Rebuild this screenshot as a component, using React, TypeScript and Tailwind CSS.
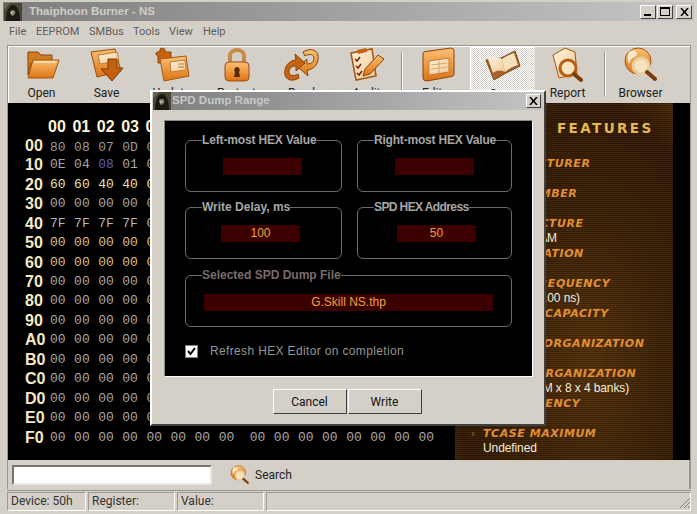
import React from 'react';

const sans = "font-['Liberation_Sans',Arial,sans-serif]";
const narrow = "font-['Roboto',Arial,sans-serif]";

const Org = 'url(#org)';
const Cream = 'url(#cream)';

const AppIcon = () => (
  <svg width="18" height="18" viewBox="0 0 18 18" className="shrink-0">
    <rect width="18" height="18" fill="#4a4636" />
    <path d="M2 18 C2 8 5 2 9 2 C13 2 16 8 16 18Z" fill="#1c1a14" />
    <path d="M6 10 C6 7 9 6 11 8 C12 10 10 13 8 13Z" fill="#8a8770" />
    <path d="M7 9l2 1-2 1z" fill="#e4e2cc" />
    <path d="M0 0h6L0 7z" fill="#6b664e" />
  </svg>
);

const FolderOpen = () => (
  <svg width="36" height="36" viewBox="0 0 36 36">
    <path d="M4 5h10l3 3h11v8H7L4 28z" fill="#d07a24" stroke="#8a4408" />
    <path d="M9 13h26l-6 18H4z" fill={Org} stroke="#a65510" />
    <path d="M10 15h22" stroke="#ffe6c0" strokeWidth="1.5" />
  </svg>
);

const FolderSave = () => (
  <svg width="36" height="36" viewBox="0 0 36 36">
    <path d="M2 5l24-3 6 22-24 6z" fill={Org} stroke="#9a4c0c" />
    <path d="M9 8l19-3 2 9-19 3z" fill={Cream} stroke="#c47a30" />
    <path d="M19 12h9v9h6L23 34 12 22h7z" fill="#c2600f" stroke="#7c3b06" />
  </svg>
);

const FolderPuzzle = () => (
  <svg width="36" height="36" viewBox="0 0 36 36">
    <path d="M6 2c3-2 6 0 5 3h6v7c-3 0-5 2-5 4H4V9C1 8 1 4 6 5z" fill="#c8640f" stroke="#8a4408" />
    <path d="M6 12l26-3 3 20-25 5z" fill={Org} stroke="#a65510" />
    <path d="M16 15l15-2 1 10-15 2z" fill={Cream} stroke="#c47a30" />
    <path d="M24 17h6M24 20h6" stroke="#b87a3a" />
  </svg>
);

const Lock = () => (
  <svg width="36" height="36" viewBox="0 0 36 36">
    <path d="M11 17V9c0-8 14-8 14 0v8" fill="none" stroke="#c98a4a" strokeWidth="4" />
    <rect x="6" y="15" width="24" height="19" rx="4" fill={Org} stroke="#9a4c0c" />
    <path d="M18 20a3 3 0 0 1 2 5l1 5h-6l1-5a3 3 0 0 1 2-5z" fill="#5a2a06" />
  </svg>
);

const Arrows = () => (
  <svg width="36" height="36" viewBox="0 0 36 36">
    <path d="M19 5c8-5 17-2 15 8-1 6-6 10-11 10l1 6-10-9 9-8v5c5 0 7-3 7-6 0-3-4-5-9-2z" fill={Org} stroke="#8a4408" />
    <path d="M15 31C7 36-1 32 1 23c1-6 6-10 11-10l-1-6 10 9-9 8v-5c-5 0-7 3-7 6 0 3 4 5 9 2z" fill="#c8640f" stroke="#8a4408" />
  </svg>
);

const Checklist = () => (
  <svg width="36" height="36" viewBox="0 0 36 36">
    <path d="M2 6l21-4 4 27-20 4z" fill={Cream} stroke="#a65510" strokeWidth="1.5" />
    <path d="M8 3l9-2 1 4-9 2z" fill="#c8640f" />
    <path d="M6 12l2 2 3-4M7 19l2 2 3-4M8 26l2 2 3-4" fill="none" stroke="#7a2a06" strokeWidth="1.6" />
    <path d="M16 22l13-14 6 4-14 15-7 2z" fill={Org} stroke="#8a4408" />
  </svg>
);

const Editor = () => (
  <svg width="36" height="36" viewBox="0 0 36 36">
    <path d="M3 7q0-2 2-2.400L31 1q3 0 3 3v23q0 2-2 2.400L7 34q-4 0-4-3z" fill={Org} stroke="#8a4408" />
    <path d="M9 14l20-3v14L9 28z" fill={Cream} stroke="#c47a30" />
    <path d="M11 18l16-2M11 22l16-2M19 14v12" stroke="#d9a873" strokeWidth="1.2" />
  </svg>
);

const Book = () => (
  <svg width="36" height="36" viewBox="0 0 36 36">
    <path d="M1 12l15-2 14-7 5 15-16 8-10 6z" fill="#a8622c" stroke="#7a4216" />
    <path d="M3 11c5-1 10-2 14 0l3 13c-4-2-8-2-12 1z" fill={Cream} />
    <path d="M17 11c4-3 9-5 12-6l4 12c-4 1-9 3-13 7z" fill="#f5e2bc" />
  </svg>
);

const Report = () => (
  <svg width="36" height="36" viewBox="0 0 36 36">
    <path d="M3 8l12-7 10 4 2 22-18 4z" fill={Cream} stroke="#a65510" />
    <circle cx="18" cy="21" r="8" fill="#f6e3c0" stroke="#b65f14" strokeWidth="3" />
    <path d="M24 27l7 6" stroke="#7c3b06" strokeWidth="4" strokeLinecap="round" />
  </svg>
);

const Globe = ({ size = 36 }: { size?: number }) => (
  <svg width={size} height={size} viewBox="0 0 36 36">
    <circle cx="15" cy="14" r="13" fill={Org} stroke="#a65510" />
    <path d="M6 5c4-3 8-1 8 2s-6 3-7 8-4-6-1-10z" fill="#fde8c8" />
    <circle cx="18" cy="19" r="8" fill="#f6e3c0" stroke="#e7cda0" strokeWidth="3" />
    <path d="M24 25l8 7" stroke="#7c3b06" strokeWidth="4" strokeLinecap="round" />
  </svg>
);

const ToolBtn = ({ label, icon, active }: { label: string; icon: React.ReactNode; active?: boolean }) => (
  <div
    className={`w-[65px] h-[55px] flex flex-col items-center shrink-0 ${
      active
        ? 'bg-[repeating-conic-gradient(#d4d0c8_0_25%,#ffffff_0_50%)] bg-[length:2px_2px] border-t border-l border-white'
        : ''
    }`}
  >
    {icon}
    <span className={`text-[12px] leading-[14px] mt-[3px] text-[#222] ${narrow}`}>{label}</span>
  </div>
);

const Sep = () => <div className="w-[2px] h-[44px] mx-[2px] my-[5px] border-l border-[#9a968e] border-r-white shrink-0 border-r" />;

const rows: { label: string; cells: string[]; color: string }[] = [
  { label: '00', cells: '80 08 07 0D 0A 01 40 00 04 50 50 00 82 10 00 00'.split(' '), color: 'text-[#9a9a9a]' },
  { label: '10', cells: '0E 04 08 01 01 00 0E 00 00 00 00 00 00 00 00 00'.split(' '), color: 'text-[#a8a8a8]' },
  { label: '20', cells: '60 60 40 40 00 00 00 00 00 00 00 00 00 00 00 00'.split(' '), color: 'text-[#e6e2a8]' },
  { label: '30', cells: '00 00 00 00 00 00 00 00 00 00 00 00 00 00 00 00'.split(' '), color: 'text-[#a8a8a8]' },
  { label: '40', cells: '7F 7F 7F 7F 00 00 00 00 00 00 00 00 00 00 00 00'.split(' '), color: 'text-[#b4b4b4]' },
  { label: '50', cells: Array(16).fill('00'), color: 'text-[#d8c088]' },
  { label: '60', cells: Array(16).fill('00'), color: 'text-[#d8c088]' },
  ...['70', '80', '90', 'A0', 'B0', 'C0', 'D0', 'E0', 'F0'].map((label) => ({
    label,
    cells: Array(16).fill('00') as string[],
    color: 'text-[#a8a8a8]',
  })),
];

const header = ['00', '01', '02', '03', '04', '05', '06', '07'];

const HexTable = () => (
  <div className="w-[447px] shrink-0 pt-[14px] bg-black">
    <div className="flex h-[19px] pl-[40px] items-center">
      {header.map((h) => (
        <span key={h} className={`w-[24.4px] text-[16px] font-bold text-[#fff4d8] ${sans}`}>{h}</span>
      ))}
    </div>
    {rows.map((r) => (
      <div key={r.label} className="flex h-[19.47px] items-center">
        <span className={`w-[42px] pl-[17px] text-[16px] font-bold text-[#f5e8c4] ${sans}`}>{r.label}</span>
        {r.cells.map((c, i) => (
          <span
            key={i}
            className={`w-[24.1px] text-[13px] leading-[14px] font-['Liberation_Mono',monospace] ${
              i === 8 ? 'ml-[7px]' : ''
            } ${r.label === '10' && i === 2 ? 'text-[#5c5cb4]' : r.color} ${
              r.label === '00' ? 'h-[10px] overflow-hidden' : ''
            }`}
          >
            {c}
          </span>
        ))}
      </div>
    ))}
  </div>
);

const features: { title: string; value?: string; valueClass?: string }[] = [
  { title: 'MANUFACTURER' },
  { title: 'PART NUMBER' },
  { title: 'ARCHITECTURE', value: 'DDR2 SDRAM', valueClass: 'tracking-[-0.6px]' },
  { title: 'ORGANIZATION' },
  { title: 'CLOCK FREQUENCY', value: '400 MHz (5.00 ns)' },
  { title: 'MEMORY CAPACITY' },
  { title: 'MODULE ORGANIZATION' },
  { title: 'DEVICE ORGANIZATION', value: '512 Mb (16M x 8 x 4 banks)' },
  { title: 'CAS# LATENCY' },
  { title: 'TCASE MAXIMUM', value: 'Undefined' },
];

const FeaturesPanel = () => (
  <div className="w-[218px] shrink-0 bg-[radial-gradient(ellipse_at_62%_72%,#5e380e_0%,#42260a_45%,#3a2008_70%,#7a4810_100%)]">
    <div className="h-full flex flex-col bg-[repeating-linear-gradient(180deg,rgba(0,0,0,0.3)_0_1px,rgba(0,0,0,0)_1px_2px)]">
      <div className="pl-[102px] h-[53px] pt-[18px] text-[13.5px] leading-[14px] font-bold text-[#e8b850] tracking-[2.4px] font-['DejaVu_Sans',sans-serif]">
        FEATURES
      </div>
      <div className="flex flex-col pl-[28px] whitespace-nowrap">
        {features.map((f) => (
          <div key={f.title} className="relative h-[30px]">
            <div className="h-[15px] text-[11px] leading-[15px] font-bold italic text-[#e48f30] tracking-[0.55px] font-['DejaVu_Sans',sans-serif]">
              {f.title}
            </div>
            {f.value && (
              <div className={`h-[15px] text-[12px] leading-[15px] text-[#f4ecd8] tracking-[-0.1px] ${f.valueClass ?? ''}`}>
                {f.value}
              </div>
            )}
            {f.title === 'TCASE MAXIMUM' && (
              <span className="absolute left-[-12px] top-0 text-[11px] leading-[15px] text-[#a86a20]">›</span>
            )}
          </div>
        ))}
      </div>
    </div>
  </div>
);

const Group = ({ title, children, dim, className, legendClass }: { title: string; children: React.ReactNode; dim?: boolean; className?: string; legendClass?: string }) => (
  <fieldset className={`border border-[#6c6c6c] rounded-[6px] flex justify-center ${className ?? ''}`}>
    <legend className={`ml-[16px] text-[12px] leading-[14px] font-bold ${dim ? 'text-[#7a6a6a]' : 'text-[#a6a6a6]'} ${legendClass ?? ''}`}>
      {title}
    </legend>
    {children}
  </fieldset>
);

const HexInput = ({ value, className }: { value?: string; className?: string }) => (
  <div className={`h-[17px] bg-[#3c0000] text-center text-[12px] leading-[17px] text-[#f0a030] ${className ?? ''}`}>
    {value}
  </div>
);

const raised = 'border border-t-white border-l-white border-r-[#404040] border-b-[#404040]';

const DialogBtn = ({ label }: { label: string }) => (
  <button className={`w-[74px] h-[25px] bg-[#d4d0c8] text-[12px] text-[#111] ${narrow} ${raised}`}>{label}</button>
);

const SpdDialog = () => (
  <div className={`absolute left-[150px] top-[90px] w-[396px] h-[336px] bg-[#d4d0c8] ${raised} border-2 border-r-[#555] border-b-[#555]`}>
    <div className="h-[18px] mx-px flex items-center bg-[linear-gradient(90deg,#7e7e7e,#c4c4c4)]">
      <AppIcon />
      <span className="ml-[1px] text-[11.5px] font-bold text-[#c8c8c8]">SPD Dump Range</span>
      <div className={`ml-auto mr-[2px] w-[15px] h-[14px] bg-[#d4d0c8] flex items-center justify-center ${raised}`}>
        <svg width="9" height="8" viewBox="0 0 9 8"><path d="M1 0l7 8M8 0L1 8" stroke="#000" strokeWidth="1.5" /></svg>
      </div>
    </div>
    <div className="mx-[12px] mt-[10px] w-[369px] h-[257px] bg-black border border-[#888] border-b-white border-r-white pl-[20px] pt-[12px]">
      <div className="grid grid-cols-[157px_155px] gap-x-[15px] gap-y-[8px] w-[327px]">
        <Group title="Left-most HEX Value" className="h-[59px] pt-[11px]" legendClass="tracking-[-0.15px]">
          <HexInput className="w-[79px] ml-[-2px]" />
        </Group>
        <Group title="Right-most HEX Value" className="h-[59px] pt-[11px]" legendClass="tracking-[-0.2px]">
          <HexInput className="w-[79px]" />
        </Group>
        <Group title="Write Delay, ms" className="h-[59px] pt-[11px]">
          <HexInput value="100" className="w-[79px] ml-[-6px]" />
        </Group>
        <Group title="SPD HEX Address" className="h-[59px] pt-[11px]" legendClass="tracking-[-0.6px]">
          <HexInput value="50" className="w-[79px] ml-[4px]" />
        </Group>
        <Group title="Selected SPD Dump File" dim className="col-span-2 h-[59px] pt-[12px] mt-px">
          <HexInput value="G.Skill NS.thp" className="w-[289px]" />
        </Group>
      </div>
      <div className="flex items-center mt-[15px]">
        <div className="w-[13px] h-[13px] bg-white border border-[#808080] flex items-center justify-center">
          <svg width="9" height="9" viewBox="0 0 9 9"><path d="M1 4l2.500 3L8 1" fill="none" stroke="#000" strokeWidth="2" /></svg>
        </div>
        <span className="ml-[12px] text-[12px] tracking-[0.35px] text-[#969696]">Refresh HEX Editor on completion</span>
      </div>
    </div>
    <div className="flex justify-center gap-px mt-[12px] pr-[2px]">
      <DialogBtn label="Cancel" />
      <DialogBtn label="Write" />
    </div>
  </div>
);

const WinBtn = ({ children }: { children: React.ReactNode }) => (
  <div className={`w-[16px] h-[14px] bg-[#d4d0c8] flex items-center justify-center ${raised}`}>{children}</div>
);

const StatusCell = ({ children, className }: { children?: React.ReactNode; className?: string }) => (
  <div className={`h-[19px] border border-[#a09c94] border-r-white border-b-white text-[12px] leading-[17px] pl-[3px] text-[#333] ${narrow} ${className ?? ''}`}>
    {children}
  </div>
);

export default function App() {
  return (
    <div className={`relative w-[697px] h-[514px] bg-[#d4d0c8] overflow-hidden flex flex-col px-[3px] pt-[2px] ${sans}`}>
      <svg width="0" height="0" className="absolute">
        <defs>
          <linearGradient id="org" x1="0" y1="0" x2="0" y2="1">
            <stop offset="0" stopColor="#fbbf74" />
            <stop offset="1" stopColor="#dc7414" />
          </linearGradient>
          <linearGradient id="cream" x1="0" y1="0" x2="1" y2="1">
            <stop offset="0" stopColor="#fff2dc" />
            <stop offset="1" stopColor="#eec894" />
          </linearGradient>
        </defs>
      </svg>

      {/* title bar */}
      <div className="h-[19px] shrink-0 flex items-center pl-[1px] pr-[2px] bg-[linear-gradient(90deg,#7e7e7e,#c6c6c6)]">
        <AppIcon />
        <span className="ml-[7px] text-[11.5px] font-bold text-[#d0cec6]">Thaiphoon Burner - NS</span>
        <div className="ml-auto flex gap-[1px]">
          <WinBtn><div className="w-[7px] h-[2px] bg-black mt-[7px] mr-[1px]" /></WinBtn>
          <WinBtn><div className="w-[10px] h-[9px] border border-t-2 border-black" /></WinBtn>
          <div className="w-[1px]" />
          <WinBtn>
            <svg width="9" height="8" viewBox="0 0 9 8"><path d="M1 0l7 8M8 0L1 8" stroke="#000" strokeWidth="1.5" /></svg>
          </WinBtn>
        </div>
      </div>

      {/* menu */}
      <div className={`h-[22px] shrink-0 flex items-center pl-[6px] text-[11px] text-[#5c5c5c] ${narrow}`}>
        <span className="w-[27px]">File</span>
        <span className="w-[53px]">EEPROM</span>
        <span className="w-[44px]">SMBus</span>
        <span className="w-[36px]">Tools</span>
        <span className="w-[34px]">View</span>
        <span>Help</span>
      </div>

      {/* toolbar + main */}
      <div className="mx-[4px] mt-[2px] w-[684px] border border-[#9a968e] border-b-0 shrink-0">
        <div className="h-[57px] flex border-t border-l border-white">
          <ToolBtn label="Open" icon={<FolderOpen />} />
          <ToolBtn label="Save" icon={<FolderSave />} />
          <ToolBtn label="Update" icon={<FolderPuzzle />} />
          <ToolBtn label="Protect" icon={<Lock />} />
          <ToolBtn label="Read" icon={<Arrows />} />
          <ToolBtn label="Audit" icon={<Checklist />} />
          <Sep />
          <ToolBtn label="Editor" icon={<Editor />} />
          <ToolBtn label="Spec" icon={<Book />} active />
          <ToolBtn label="Report" icon={<Report />} />
          <div className="w-[2px]" />
          <Sep />
          <ToolBtn label="Browser" icon={<Globe />} />
        </div>
        <div className="h-[357px] flex bg-black overflow-hidden">
          <HexTable />
          <FeaturesPanel />
        </div>
        <div className="h-[29px] flex items-center pl-[4px] border-r border-[#9a968e]">
          <div className="w-[200px] h-[20px] bg-white border-2 border-[#77736c] border-r-[#e8e6e0] border-b-[#e8e6e0]" />
          <div className="ml-[18px]"><Globe size={20} /></div>
          <span className={`ml-[5px] text-[12px] text-[#222] ${narrow}`}>Search</span>
        </div>
      </div>

      {/* status bar */}
      <div className="mt-[1px] ml-[4px] border-t border-[#9a968e] pt-[1px] flex gap-[2px] relative w-[684px]">
        <StatusCell className="w-[79px]">Device: 50h</StatusCell>
        <StatusCell className="w-[87px]">Register:</StatusCell>
        <StatusCell className="w-[87px]">Value:</StatusCell>
        <StatusCell className="flex-1" />
        <svg width="12" height="12" viewBox="0 0 12 12" className="absolute right-0 bottom-[2px]">
          <path d="M11 1L1 11M11 5L5 11M11 9L9 11" stroke="#808080" />
        </svg>
      </div>

      <SpdDialog />
    </div>
  );
}
